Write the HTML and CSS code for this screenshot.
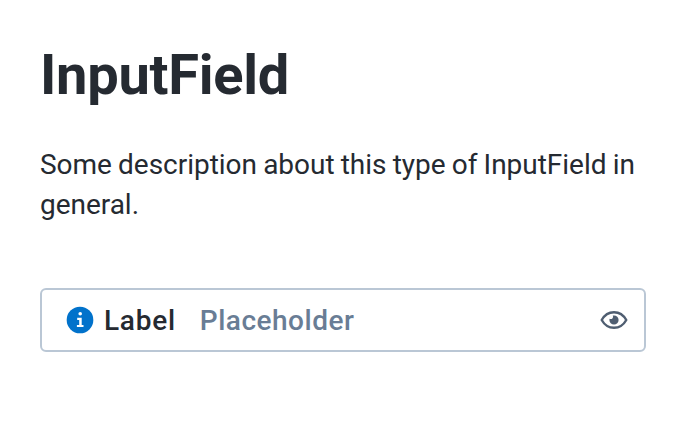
FILE: index.html
```html
<!DOCTYPE html>
<html lang="en">
<head>
<meta charset="utf-8">
<title>InputField</title>
<link rel="stylesheet" href="styles.css">
</head>
<body>
<main class="page">
  <h1 class="title">InputField</h1>
  <p class="description">Some description about this type of InputField in general.</p>
  <div class="field">
    <svg class="info" viewBox="0 0 28 28" aria-hidden="true">
      <circle cx="14" cy="14" r="13.33" fill="#0172cb"/>
      <circle cx="14.200" cy="7.800" r="1.800" fill="#fff"/>
      <path d="M11.200 11.800h4.500v7.200h1.800v2.100h-6.600v-2.100h2.300v-5h-2z" fill="#fff"/>
    </svg>
    <span class="label">Label</span>
    <span class="placeholder">Placeholder</span>
    <svg class="eye" viewBox="0 0 28 28" aria-hidden="true">
      <path d="M1.700 14C4.500 9 8.500 6.200 14 6.200s9.500 2.800 12.300 7.800c-2.800 5-6.800 7.800-12.300 7.800S4.500 19 1.700 14z" fill="none" stroke="#4f5e71" stroke-width="2.400" stroke-linejoin="round"/>
      <path d="M14 9.400a4.600 4.600 0 1 1-4.600 4.600c0-.5.100-.9.200-1.300a2.300 2.300 0 0 0 3.200-3.100c.4-.1.800-.2 1.200-.2z" fill="#4f5e71"/>
    </svg>
  </div>
</main>
</body>
</html>
```
FILE: styles.css
```css
body { margin: 0; background: #fff; color: #252a31; font-family: Roboto, sans-serif; }
.page { padding: 41px 40px 40px; }
.title { margin: 0; font-size: 56px; line-height: 68px; font-weight: 700; letter-spacing: -0.28px; }
.description { margin: 36px 0 63px; font-size: 28px; line-height: 40px; letter-spacing: -0.03px; word-spacing: -0.7px; }
.field { box-sizing: border-box; height: 64px; border: 2px solid #bac7d5; border-radius: 6px; display: flex; align-items: center; padding: 0 16px 0 24px; font-size: 28px; font-weight: 500; }
.info { width: 28px; height: 28px; margin-right: 10px; }
.label { letter-spacing: 0.75px; margin-right: 24px; }
.placeholder { color: #697d95; letter-spacing: 0.5px; }
.eye { width: 28px; height: 28px; margin-left: auto; }
```
